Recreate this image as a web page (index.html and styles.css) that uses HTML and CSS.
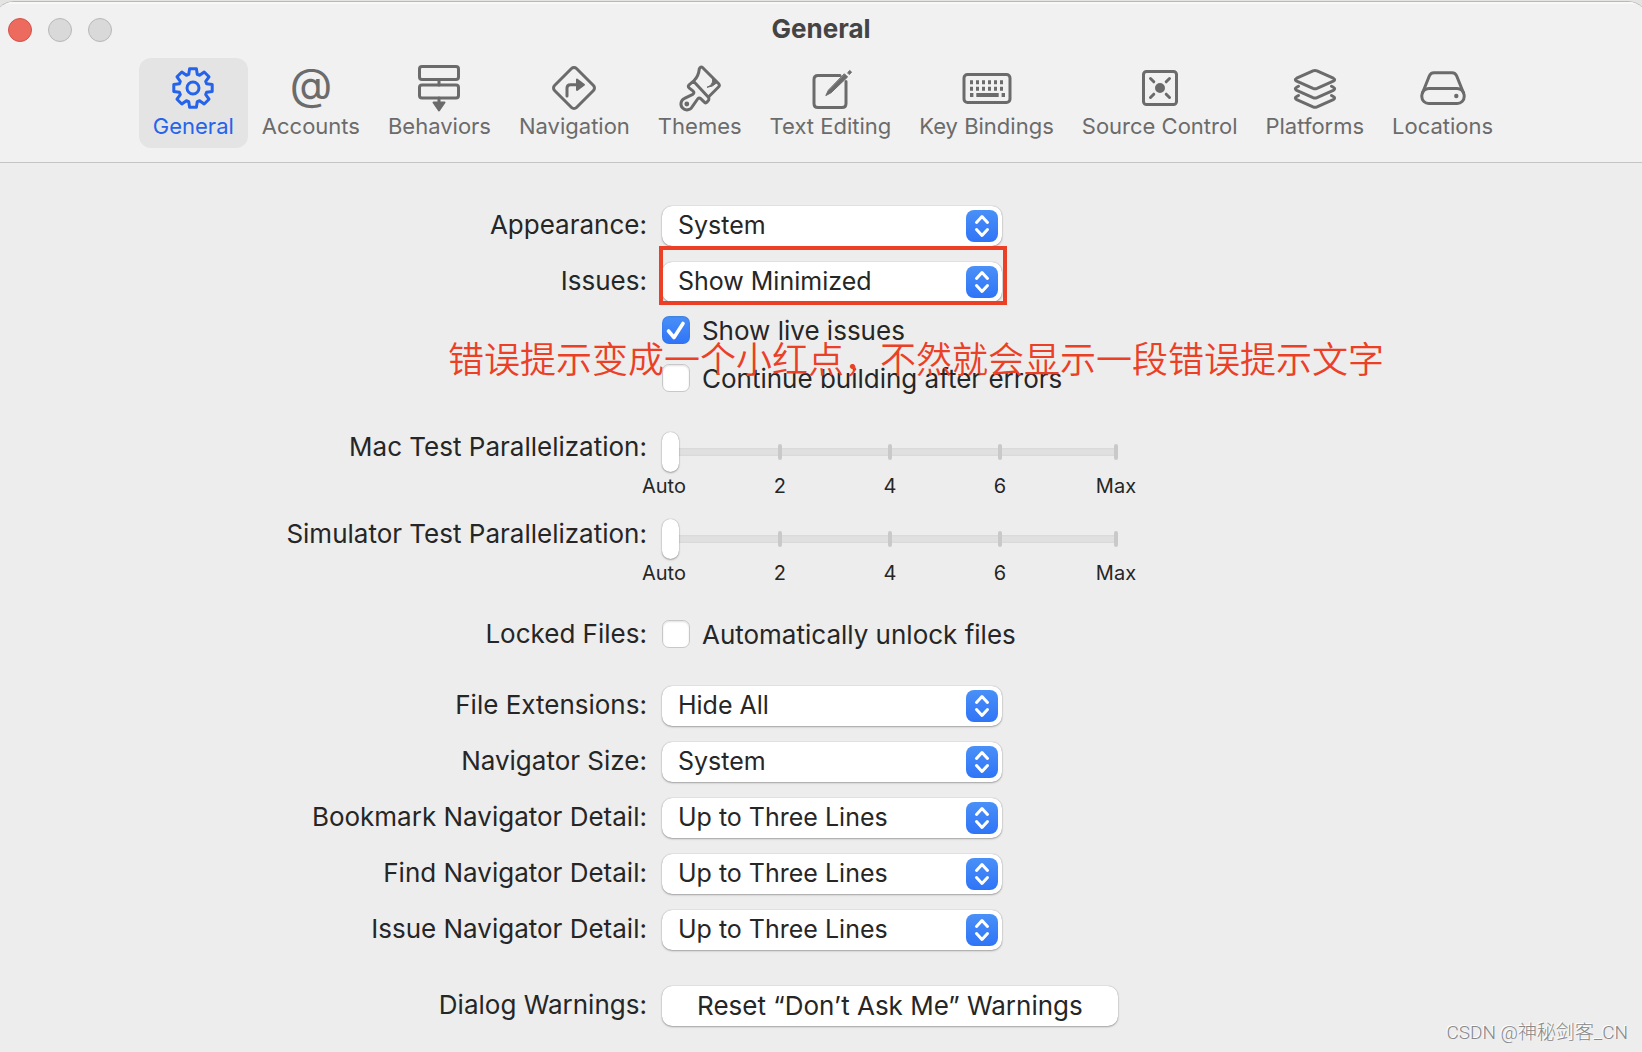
FILE: index.html
```html
<!DOCTYPE html>
<html lang="en">
<head>
  <meta charset="UTF-8">
  <meta name="viewport" content="width=device-width, initial-scale=1.0">
  <title>General</title>
  <link rel="stylesheet" href="styles.css">
</head>
<body>

<div class="window">
  <header class="header">
    <div class="titlebar">
      <div class="lights">
        <button class="light close" aria-label="Close"></button>
        <button class="light" aria-label="Minimize"></button>
        <button class="light" aria-label="Zoom"></button>
      </div>
      <h1>General</h1>
    </div>

    <nav class="toolbar">
      <button class="tab active">
        <svg class="icon" viewBox="0 0 48 48">
          <g transform="translate(24 24)">
            <path d="M-3.4-19.2H3.4L4.3-13.6L6.6-12.7L11.2-16L16-11.2L12.7-6.6L13.6-4.3L19.2-3.4V3.4L13.6 4.3L12.7 6.6L16 11.2L11.2 16L6.6 12.7L4.3 13.6L3.4 19.2H-3.4L-4.3 13.6L-6.6 12.7L-11.2 16L-16 11.2L-12.7 6.6L-13.6 4.3L-19.2 3.4V-3.4L-13.6-4.3L-12.7-6.6L-16-11.2L-11.2-16L-6.6-12.7L-4.3-13.6Z"/>
            <circle r="6"/>
          </g>
        </svg>
        <span>General</span>
      </button>
      <button class="tab">
        <span class="icon at">@</span>
        <span>Accounts</span>
      </button>
      <button class="tab">
        <svg class="icon" viewBox="0 0 48 48">
          <rect x="4.5" y="2.5" width="39" height="13" rx="2.5"/>
          <rect x="4.5" y="21" width="39" height="13" rx="2.5"/>
          <path d="M24 16V21M24 34V40"/>
          <path class="solid" d="M18.5 38.5H29.5L24 46.5Z"/>
        </svg>
        <span>Behaviors</span>
      </button>
      <button class="tab">
        <svg class="icon" viewBox="0 0 48 48">
          <rect x="8.5" y="8.5" width="31" height="31" rx="3.5" transform="rotate(45 24 24)"/>
          <path d="M17 32V24Q17 20.7 20.5 20.7H28"/>
          <path class="solid" d="M27 15.5L34 20.7L27 26Z"/>
        </svg>
        <span>Navigation</span>
      </button>
      <button class="tab">
        <svg class="icon" viewBox="0 0 48 48">
          <path d="M18.5 16Q22.5 12 23.3 5Q24.2 1.8 27 4L42.5 19.5Q44.3 21.3 42.5 23L32.5 33"/>
          <path d="M17.5 17.2L12.8 21.2Q11.8 22.5 13 23.8L17.2 27.2Q18.8 28.8 16.8 30.3L8.5 34.4A6 6 0 1 0 16.3 42.6L21.6 35Q23 33 24.7 34.6L28.6 38.4Q29.8 39.4 31 38.2L32.8 35.8Q33.5 34.5 32.4 33.2L17.5 17.2"/>
          <circle class="solid" cx="10.8" cy="40" r="1.4"/>
          <path class="solid thin" d="M36.6 13.5V18Q35.5 22 31 23.3Q36 23.5 41.5 18.3Z"/>
        </svg>
        <span>Themes</span>
      </button>
      <button class="tab">
        <svg class="icon" viewBox="0 0 48 48">
          <path d="M34 11.5H12Q8 11.5 8 15.5V39.5Q8 43.5 12 43.5H36Q40 43.5 40 39.5V17.5"/>
          <path class="solid thin" d="M38.6 10L41.6 13L25 28.8L19.8 31.6L22.3 26.4ZM41.8 8.5L43.8 6.5L45.6 8.2L43.4 10.3Z"/>
        </svg>
        <span>Text Editing</span>
      </button>
      <button class="tab">
        <svg class="icon wide" viewBox="0 0 52 48">
          <rect x="3" y="10.5" width="46" height="28" rx="3.5"/>
          <path class="keys" d="M9 18.3H43M9 24.7H43"/>
          <path class="bar" d="M9 31H12.4M15.3 31H37.7M40.6 31H44"/>
        </svg>
        <span>Key Bindings</span>
      </button>
      <button class="tab">
        <svg class="icon" viewBox="0 0 48 48">
          <rect x="7.5" y="7.5" width="33" height="33" rx="3"/>
          <circle class="solid" cx="24" cy="24" r="4"/>
          <path d="M14.5 14.5L17.8 17.8M33.5 14.5L30.2 17.8M14.5 33.5L17.8 30.2M33.5 33.5L30.2 30.2"/>
        </svg>
        <span>Source Control</span>
      </button>
      <button class="tab">
        <svg class="icon" viewBox="0 0 48 48">
          <path d="M22 6.8Q24 6 26 6.8L42.3 14.2Q45 15.7 42.3 17.2L26 24.4Q24 25.2 22 24.4L5.7 17.2Q3 15.7 5.7 14.2Z"/>
          <path d="M7.5 22.3L5.7 23.3Q3 24.8 5.7 26.4L22 33.6Q24 34.4 26 33.6L42.3 26.4Q45 24.8 42.3 23.3L40.5 22.3"/>
          <path d="M7.5 31.5L5.7 32.5Q3 34 5.7 35.6L22 42.8Q24 43.6 26 42.8L42.3 35.6Q45 34 42.3 32.5L40.5 31.5"/>
        </svg>
        <span>Platforms</span>
      </button>
      <button class="tab">
        <svg class="icon" viewBox="0 0 48 48">
          <rect x="2.8" y="24.5" width="42.4" height="15" rx="7"/>
          <path d="M3.5 29L10.3 12Q11.6 8.7 15 8.7H33Q36.4 8.7 37.7 12L44.5 29"/>
          <circle class="solid" cx="37.3" cy="32" r="1.2"/>
        </svg>
        <span>Locations</span>
      </button>
    </nav>
  </header>

  <main class="form">
    <div class="row">
      <label class="name" for="appearance">Appearance:</label>
      <div class="popup">
        <select id="appearance"><option>System</option></select>
        <svg class="stepper" viewBox="0 0 32 32"><path d="M10.5 12.5L16 6.5L21.5 12.5M10.5 19.5L16 25.5L21.5 19.5"/></svg>
      </div>
    </div>
    <div class="row">
      <label class="name" for="issues">Issues:</label>
      <div class="issues">
        <div class="popup">
          <select id="issues"><option>Show Minimized</option></select>
          <svg class="stepper" viewBox="0 0 32 32"><path d="M10.5 12.5L16 6.5L21.5 12.5M10.5 19.5L16 25.5L21.5 19.5"/></svg>
          <div class="marker"></div>
        </div>
        <label class="check"><input type="checkbox" checked>Show live issues</label>
        <label class="check"><input type="checkbox">Continue building after errors</label>
        <p class="note" lang="zh-CN">错误提示变成一个小红点，不然就会显示一段错误提示文字</p>
      </div>
    </div>

    <div class="row group tests">
      <label class="name" for="mac-tests">Mac Test Parallelization:</label>
      <div class="slider">
        <input type="range" id="mac-tests" min="0" max="8" value="0">
        <div class="scale"><span>Auto</span><span>2</span><span>4</span><span>6</span><span>Max</span></div>
      </div>
    </div>
    <div class="row tests">
      <label class="name" for="sim-tests">Simulator Test Parallelization:</label>
      <div class="slider">
        <input type="range" id="sim-tests" min="0" max="8" value="0">
        <div class="scale"><span>Auto</span><span>2</span><span>4</span><span>6</span><span>Max</span></div>
      </div>
    </div>

    <div class="row group locked">
      <span class="name">Locked Files:</span>
      <label class="check"><input type="checkbox">Automatically unlock files</label>
    </div>

    <div class="row group">
      <label class="name" for="extensions">File Extensions:</label>
      <div class="popup">
        <select id="extensions"><option>Hide All</option></select>
        <svg class="stepper" viewBox="0 0 32 32"><path d="M10.5 12.5L16 6.5L21.5 12.5M10.5 19.5L16 25.5L21.5 19.5"/></svg>
      </div>
    </div>
    <div class="row">
      <label class="name" for="nav-size">Navigator Size:</label>
      <div class="popup">
        <select id="nav-size"><option>System</option></select>
        <svg class="stepper" viewBox="0 0 32 32"><path d="M10.5 12.5L16 6.5L21.5 12.5M10.5 19.5L16 25.5L21.5 19.5"/></svg>
      </div>
    </div>
    <div class="row">
      <label class="name" for="bookmark-detail">Bookmark Navigator Detail:</label>
      <div class="popup">
        <select id="bookmark-detail"><option>Up to Three Lines</option></select>
        <svg class="stepper" viewBox="0 0 32 32"><path d="M10.5 12.5L16 6.5L21.5 12.5M10.5 19.5L16 25.5L21.5 19.5"/></svg>
      </div>
    </div>
    <div class="row">
      <label class="name" for="find-detail">Find Navigator Detail:</label>
      <div class="popup">
        <select id="find-detail"><option>Up to Three Lines</option></select>
        <svg class="stepper" viewBox="0 0 32 32"><path d="M10.5 12.5L16 6.5L21.5 12.5M10.5 19.5L16 25.5L21.5 19.5"/></svg>
      </div>
    </div>
    <div class="row">
      <label class="name" for="issue-detail">Issue Navigator Detail:</label>
      <div class="popup">
        <select id="issue-detail"><option>Up to Three Lines</option></select>
        <svg class="stepper" viewBox="0 0 32 32"><path d="M10.5 12.5L16 6.5L21.5 12.5M10.5 19.5L16 25.5L21.5 19.5"/></svg>
      </div>
    </div>

    <div class="row group">
      <span class="name">Dialog Warnings:</span>
      <button class="reset">Reset “Don’t Ask Me” Warnings</button>
    </div>
  </main>

  <div class="watermark" lang="zh-CN">CSDN @神秘剑客_CN</div>
</div>

</body>
</html>
```

FILE: styles.css
```css
* {
  box-sizing: border-box;
  margin: 0;
  padding: 0;
}

body {
  font-family: Inter, "Noto Sans CJK SC", sans-serif;
  font-size: 26px;
  color: #262626;
  background: #e4e4e2;
  padding-top: 1px;
  overflow-x: hidden;
}

button,
select,
input {
  font: inherit;
  color: inherit;
  border: none;
  appearance: none;
}

.window {
  position: relative;
  min-height: calc(100vh - 1px);
  margin: 0 -6px;
  padding: 0 6px;
  background: #ededed;
  border-top: 1px solid #b9b9b9;
  border-radius: 20px 20px 0 0;
  overflow: hidden;
}

/* title bar and toolbar */
.header {
  margin: 0 -6px;
  padding: 0 6px 14px;
  background: #f1f1f1;
  border-top: 2px solid #f8f8f8;
  border-bottom: 1px solid #c4c4c4;
}

.titlebar {
  display: grid;
  grid-template-columns: 1fr auto 1fr;
  height: 54px;
}

.titlebar h1 {
  font-size: 26px;
  line-height: 50px;
  color: #444;
}

.lights {
  display: flex;
  align-items: center;
  gap: 16px;
  height: 52px;
  padding-left: 8px;
}

.light {
  width: 24px;
  height: 24px;
  border-radius: 50%;
  background: #d9d9d9;
  border: 1px solid #b8b8b8;
}

.light.close {
  background: #ec6a5e;
  border-color: #d35247;
}

.toolbar {
  display: flex;
  justify-content: center;
  padding-left: 4px;
}

.tab {
  display: flex;
  flex-direction: column;
  align-items: center;
  height: 90px;
  padding: 6px 14px 8px;
  border-radius: 12px;
  background: none;
  color: #6b6b6b;
  font-size: 22px;
  line-height: 28px;
  white-space: nowrap;
}

.tab.active {
  background: #e4e4e4;
  color: #2563eb;
}

.icon {
  width: 48px;
  height: 48px;
  fill: none;
  stroke: currentColor;
  stroke-width: 3;
  stroke-linecap: round;
  stroke-linejoin: round;
}

.icon.wide {
  width: 52px;
}

.icon .solid {
  fill: currentColor;
  stroke-width: 2;
}

.icon .thin {
  stroke-width: 1;
}

.icon .keys {
  stroke-width: 4;
  stroke-linecap: butt;
  stroke-dasharray: 3 3;
}

.icon .bar {
  stroke-width: 4;
  stroke-linecap: butt;
}

.icon.at {
  font-size: 44px;
  line-height: 40px;
  text-align: center;
}

/* settings */
.form {
  padding-top: 43px;
}

.row {
  display: grid;
  grid-template-columns: 39.4% 1fr;
  column-gap: 15px;
  align-items: start;
  justify-items: start;
  margin-bottom: 16px;
}

.row.group {
  margin-top: 36px;
}

.row.tests {
  margin-bottom: 18px;
}

.row.locked {
  margin-bottom: 38px;
}

.name {
  justify-self: end;
  line-height: 38px;
  white-space: nowrap;
}

.locked .name {
  line-height: 28px;
}

.popup {
  position: relative;
  width: 340px;
}

.popup select,
.reset {
  display: block;
  width: 100%;
  height: 40px;
  padding: 0 48px 2px 16px;
  border-radius: 10px;
  background: #fff;
  box-shadow: 0 0 1px rgba(0, 0, 0, 0.35), 0 1px 2px rgba(0, 0, 0, 0.3);
}

.popup select {
  font-size: 25px;
}

.reset {
  width: 456px;
  padding: 0 0 2px;
}

.stepper {
  position: absolute;
  top: 4px;
  right: 4px;
  width: 32px;
  height: 32px;
  border-radius: 8px;
  background: linear-gradient(#4a90f8, #2f74f6);
  fill: none;
  stroke: #fff;
  stroke-width: 3;
  stroke-linecap: round;
  stroke-linejoin: round;
  pointer-events: none;
}

.issues {
  position: relative;
}

.check {
  display: flex;
  align-items: center;
  gap: 12px;
  height: 28px;
  white-space: nowrap;
}

.issues .check {
  margin: 14px 0 20px;
}

.issues .check + .check {
  margin-bottom: 0;
}

.check input {
  width: 28px;
  height: 28px;
  border-radius: 7px;
  background: #fff;
  border: 1px solid #c8c8c8;
  box-shadow: inset 0 1px 2px rgba(0, 0, 0, 0.12);
}

.check input:checked {
  border: none;
  background: url("data:image/svg+xml,%3Csvg xmlns='http://www.w3.org/2000/svg' viewBox='0 0 28 28'%3E%3Cpath d='M6.5 15L12 21.5L21 7.5' fill='none' stroke='white' stroke-width='3.6' stroke-linecap='round' stroke-linejoin='round'/%3E%3C/svg%3E"), linear-gradient(#4a90f8, #2f74f6);
}

/* red annotations drawn over the form */
.marker {
  position: absolute;
  top: -16px;
  left: -3px;
  width: 348px;
  height: 59px;
  border: 4px solid #eb4026;
}

.note {
  position: absolute;
  top: 70px;
  left: -214px;
  font-family: "Noto Sans CJK SC", sans-serif;
  font-size: 36px;
  font-weight: 350;
  line-height: 50px;
  color: #eb4026;
  white-space: nowrap;
  pointer-events: none;
}

.slider {
  width: 456px;
  padding-top: 4px;
}

.slider input {
  display: block;
  width: 100%;
  height: 40px;
  background: linear-gradient(#d8d8d8, #e0e0e0 2px, #e0e0e0 6px, #d8d8d8) 8px center / 447px 8px no-repeat;
}

.slider input::-webkit-slider-thumb {
  appearance: none;
  width: 17px;
  height: 40px;
  border-radius: 9px;
  background: #fff;
  box-shadow: 0 0 1px rgba(0, 0, 0, 0.4), 0 1px 2px rgba(0, 0, 0, 0.3);
}

.scale {
  display: flex;
  margin: 3px -54px 0 -53px;
  font-size: 20px;
  line-height: 22px;
}

.scale span {
  position: relative;
  width: 110px;
  text-align: center;
}

.scale span:first-child {
  margin-right: 6px;
}

.scale span:last-child {
  margin-left: 6px;
}

.scale span + span::before {
  content: "";
  position: absolute;
  top: -31px;
  left: 53px;
  width: 4px;
  height: 16px;
  border-radius: 2px;
  background: #c9c9c9;
}

.watermark {
  position: absolute;
  right: 20px;
  bottom: 6px;
  font-family: Roboto, "Noto Sans CJK SC", sans-serif;
  font-size: 19px;
  font-weight: 300;
  line-height: 26px;
  color: #888;
  text-shadow: -1px -1px 0 #fff;
}
```
